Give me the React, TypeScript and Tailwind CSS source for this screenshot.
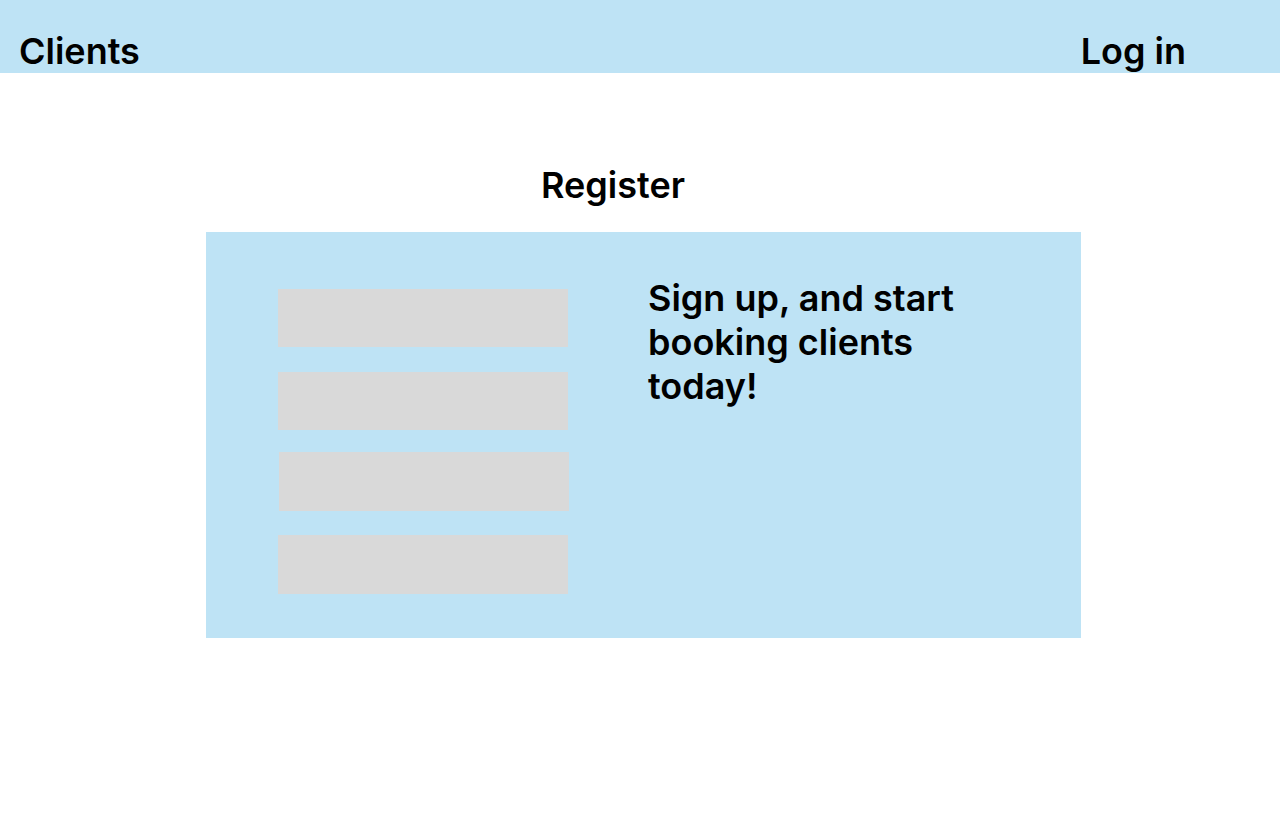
const fields = [
  { label: 'Name', cls: 'mt-0 ml-0 h-[58px]' },
  { label: 'Email', cls: 'mt-[25px] ml-0 h-[58px]' },
  { label: 'Password', cls: 'mt-[22px] ml-px h-[59px]' },
  { label: 'Confirm password', cls: 'mt-[24px] ml-0 h-[59px]' },
];

const App = () => {
  return (
    <div className="min-h-[832px] bg-white text-black font-['Inter',sans-serif]">
      {/* Top bar */}
      <header className="h-[73px] bg-[#bee3f5] flex items-end justify-between pl-[19px] pr-[94px]">
        <span className="text-[36px] font-semibold leading-[43px]">Clients</span>
        <span className="text-[36px] font-semibold leading-[43px]">Log in</span>
      </header>

      <main className="pt-[91px]">
        <h1 className="pl-[541px] text-[36px] font-semibold leading-[43px]">Register</h1>

        {/* Register card */}
        <section className="mt-[25px] ml-[206px] w-[875px] h-[406px] bg-[#bee3f5] flex">
          <form className="pl-[72px] pt-[57px] flex flex-col">
            {fields.map((f) => (
              <input
                key={f.label}
                aria-label={f.label}
                className={`${f.cls} w-[290px] p-0 bg-[#d9d9d9] outline-none`}
              />
            ))}
          </form>
          <p className="ml-[79px] pt-[44px] w-[340px] text-[36px] font-semibold leading-[44px]">
            Sign up, and start booking clients today!
          </p>
        </section>
      </main>
    </div>
  );
};

export default App;
